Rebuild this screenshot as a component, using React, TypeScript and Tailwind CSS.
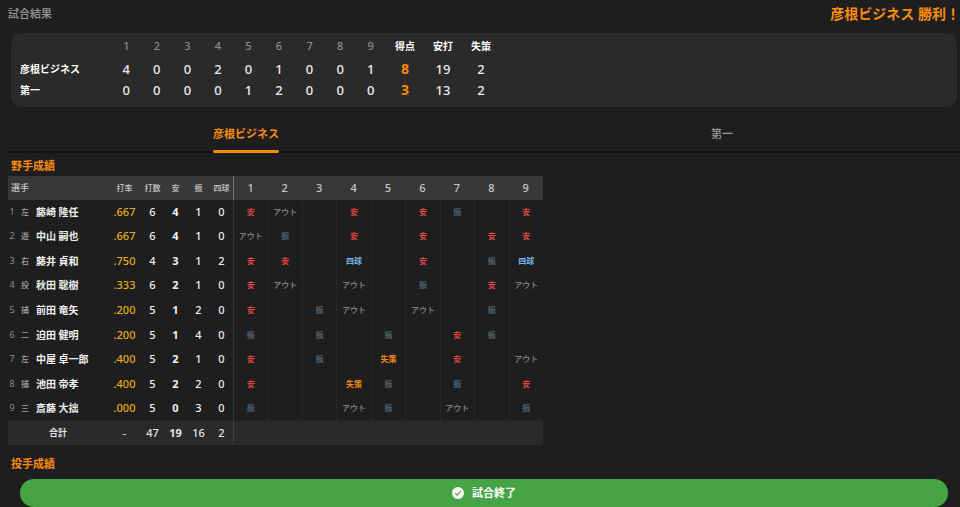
import { useState } from "react";
import clsx from "clsx";

const teams = [
  { id: "away", name: "彦根ビジネス", innings: [4, 0, 0, 2, 0, 1, 0, 0, 1], runs: 8, hits: 19, errors: 2 },
  { id: "home", name: "第一", innings: [0, 0, 0, 0, 1, 2, 0, 0, 0], runs: 3, hits: 13, errors: 2 },
];

const batters = [
  { position: "左", name: "藤崎 隆任", avg: ".667", stats: [6, 4, 1, 0], results: ["安", "アウト", "", "安", "", "安", "振", "", "安"] },
  { position: "遊", name: "中山 嗣也", avg: ".667", stats: [6, 4, 1, 0], results: ["アウト", "振", "", "安", "", "安", "", "安", "安"] },
  { position: "右", name: "藤井 貞和", avg: ".750", stats: [4, 3, 1, 2], results: ["安", "安", "", "四球", "", "安", "", "振", "四球"] },
  { position: "投", name: "秋田 聡樹", avg: ".333", stats: [6, 2, 1, 0], results: ["安", "アウト", "", "アウト", "", "振", "", "安", "アウト"] },
  { position: "捕", name: "前田 竜矢", avg: ".200", stats: [5, 1, 2, 0], results: ["安", "", "振", "アウト", "", "アウト", "", "振", ""] },
  { position: "二", name: "迫田 健明", avg: ".200", stats: [5, 1, 4, 0], results: ["振", "", "振", "", "振", "", "安", "振", ""] },
  { position: "左", name: "中屋 卓一郎", avg: ".400", stats: [5, 2, 1, 0], results: ["安", "", "振", "", "失策", "", "安", "", "アウト"] },
  { position: "捕", name: "池田 帝孝", avg: ".400", stats: [5, 2, 2, 0], results: ["安", "", "", "失策", "振", "", "振", "", "安"] },
  { position: "三", name: "斎藤 大拙", avg: ".000", stats: [5, 0, 3, 0], results: ["振", "", "", "アウト", "振", "", "アウト", "", "振"] },
];

const totals = [47, 19, 16, 2];
const inningNumbers = [1, 2, 3, 4, 5, 6, 7, 8, 9];
const statLabels = ["打数", "安", "振", "四球"];

const resultColors: Record<string, string> = {
  安: "text-[#e04545] font-bold",
  アウト: "text-[#8a8a8a] font-medium",
  振: "text-[#4d626e] font-bold",
  四球: "text-[#78b4ea] font-bold",
  失策: "text-[#f58a07] font-bold",
};

function Scoreboard() {
  return (
    <div className="mx-[3px] rounded-[10px] bg-[#2a2a2a] pb-[7px] pl-[9px] shadow-sm">
      <table className="w-[480px] table-fixed border-separate border-spacing-0 text-center">
        <colgroup>
          <col className="w-[91px]" />
          {inningNumbers.map((n) => (
            <col key={n} />
          ))}
          <col className="w-[38px]" />
          <col className="w-[38px]" />
          <col className="w-[38px]" />
        </colgroup>
        <thead>
          <tr className="h-[25px] text-[10px] leading-4 text-white">
            <td className="p-0" />
            {inningNumbers.map((n) => (
              <th key={n} className="p-0 text-[11px] font-medium text-[#8c8c8c]">{n}</th>
            ))}
            <th className="p-0 font-bold">得点</th>
            <th className="p-0 font-bold">安打</th>
            <th className="p-0 font-bold">失策</th>
          </tr>
        </thead>
        <tbody>
          {teams.map((team) => (
            <tr key={team.id} className="h-[21px] text-[13px] leading-4 font-medium text-[#ececec]">
              <th className="p-0 text-left text-[10px] font-bold text-white">{team.name}</th>
              {team.innings.map((score, i) => (
                <td key={i} className="p-0">{score}</td>
              ))}
              <td className="p-0 text-[14px] font-bold text-[#fb8c00]">{team.runs}</td>
              <td className="p-0">{team.hits}</td>
              <td className="p-0">{team.errors}</td>
            </tr>
          ))}
        </tbody>
      </table>
    </div>
  );
}

function BattingTable() {
  return (
    <table className="h-[269px] w-[535px] table-fixed border-separate border-spacing-0 text-center text-[11px] leading-4">
      <colgroup>
        <col className="w-[100px]" />
        <col className="w-[33px]" />
        {statLabels.map((label) => (
          <col key={label} className="w-[23px]" />
        ))}
        {inningNumbers.map((n) => (
          <col key={n} />
        ))}
      </colgroup>
      <thead>
        <tr className="h-6 bg-[#383838] text-[8px] text-[#c8c8c8]">
          <th className="p-0 pl-[3px] text-left text-[9px] font-medium">選手</th>
          <th className="p-0 font-medium">打率</th>
          {statLabels.map((label) => (
            <th key={label} className="p-0 font-medium whitespace-nowrap">{label}</th>
          ))}
          {inningNumbers.map((n) => (
            <th
              key={n}
              className={clsx("p-0 text-[11px] font-medium", n === 1 && "border-l border-[#707070]")}
            >
              {n}
            </th>
          ))}
        </tr>
      </thead>
      <tbody>
        {batters.map((batter, row) => (
          <tr key={batter.name} className="h-6 text-[#f0f0f0]">
            <td className="border-b border-[#232323] p-0">
              <div className="flex items-center text-left whitespace-nowrap">
                <span className="w-2 text-center text-[9px] text-[#8c8c8c]">{row + 1}</span>
                <span className="ml-[5px] w-[15px] text-[8px] font-medium text-[#a0a0a0]">{batter.position}</span>
                <span className="text-[10px] font-bold">{batter.name}</span>
              </div>
            </td>
            <td className="border-b border-[#232323] p-0 font-medium text-[#e6ac0c]">{batter.avg}</td>
            {batter.stats.map((value, i) => (
              <td
                key={i}
                className={clsx("border-b border-[#232323] p-0", i === 1 ? "font-bold" : "font-medium")}
              >
                {value}
              </td>
            ))}
            {batter.results.map((result, i) => (
              <td
                key={i}
                className={clsx(
                  "border-b border-l border-b-[#232323] p-0 text-[8px]",
                  i === 0 ? "border-l-[#363636]" : "border-l-[#282828]",
                  resultColors[result]
                )}
              >
                {result}
              </td>
            ))}
          </tr>
        ))}
      </tbody>
      <tfoot>
        <tr className="h-6 bg-[#2a2a2a] text-[#e4e4e4]">
          <th className="p-0 text-[9px] font-bold">合計</th>
          <td className="p-0">-</td>
          {totals.map((value, i) => (
            <td key={i} className={clsx("p-0", i === 1 ? "font-bold" : "font-medium")}>{value}</td>
          ))}
          <td colSpan={9} className="border-l border-[#404040] p-0" />
        </tr>
      </tfoot>
    </table>
  );
}

export default function App() {
  const [activeTeam, setActiveTeam] = useState("away");

  return (
    <main
      lang="ja"
      className="flex min-h-screen flex-col bg-[#1e1e1e] pl-2 font-['Noto_Sans','Noto_Sans_CJK_JP',sans-serif]"
    >
      <header className="flex h-[33px] items-center justify-between pb-1.5">
        <h1 className="text-[11px] leading-4 font-medium text-[#9a9a9a]">試合結果</h1>
        <p className="text-[14px] leading-5 font-bold text-[#fb8c00]">彦根ビジネス 勝利！</p>
      </header>

      <Scoreboard />

      <div role="tablist" className="mt-1.5 flex h-10 border-b-2 border-[#121212]">
        {teams.map((team) => (
          <div key={team.id} className="flex flex-1 justify-center">
            <button
              type="button"
              role="tab"
              aria-selected={activeTeam === team.id}
              onClick={() => setActiveTeam(team.id)}
              className="-mb-0.5 flex flex-col text-[11px] leading-4"
            >
              <span
                className={clsx(
                  "flex flex-1 items-center pt-1",
                  activeTeam === team.id ? "font-bold text-[#fb8c00]" : "font-medium text-[#9a9a9a]"
                )}
              >
                {team.name}
              </span>
              <span className={clsx("h-[3px] w-full rounded-full", activeTeam === team.id && "bg-[#fb8c00]")} />
            </button>
          </div>
        ))}
      </div>

      <h2 className="flex h-[23px] items-center pt-0.5 pl-[3px] text-[11px] leading-4 font-bold text-[#fb8c00]">野手成績</h2>
      <BattingTable />
      <h2 className="flex h-[34px] items-center pt-1 pl-[3px] text-[11px] leading-4 font-bold text-[#fb8c00]">投手成績</h2>

      <button
        type="button"
        className="mr-3 ml-3 flex h-7 items-center justify-center gap-2 rounded-full bg-[#45a546] text-[11px] leading-4 font-bold text-white"
      >
        <svg viewBox="0 0 12 12" className="h-3 w-3" aria-hidden="true">
          <circle cx="6" cy="6" r="6" fill="white" />
          <path d="M3.2 6.2 5.1 8.1 8.9 4.2" fill="none" stroke="#45a546" strokeWidth="1.2" />
        </svg>
        試合終了
      </button>
    </main>
  );
}
